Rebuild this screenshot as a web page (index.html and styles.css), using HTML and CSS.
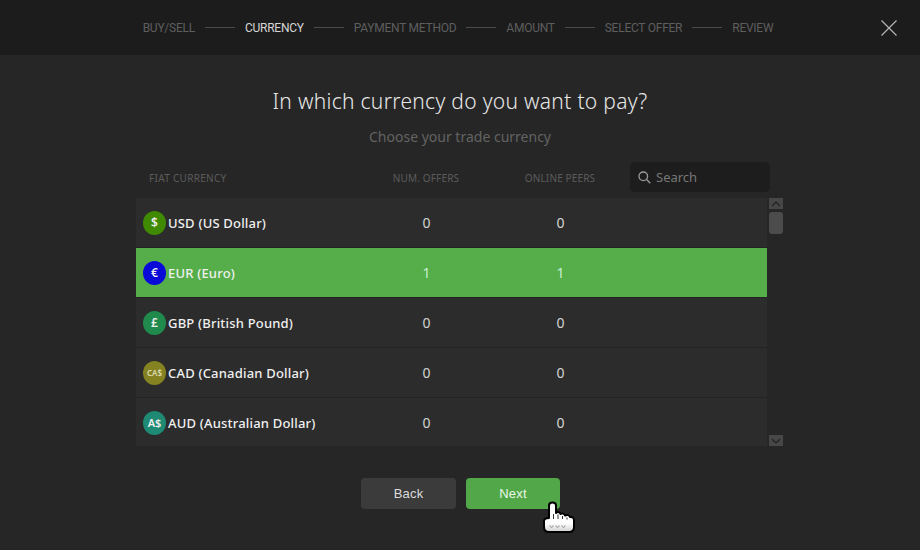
FILE: index.html
```html
<!DOCTYPE html>
<html lang="en">
<head>
<meta charset="utf-8">
<title>Currency</title>
<link rel="stylesheet" href="styles.css">
</head>
<body>
<header class="top">
  <nav class="steps">
    <span class="step">BUY/SELL</span><i class="line"></i>
    <span class="step active">CURRENCY</span><i class="line"></i>
    <span class="step">PAYMENT METHOD</span><i class="line"></i>
    <span class="step">AMOUNT</span><i class="line"></i>
    <span class="step">SELECT OFFER</span><i class="line"></i>
    <span class="step">REVIEW</span>
  </nav>
  <svg class="close" width="16" height="16" viewBox="0 0 16 16"><path d="M.5.5l15 15M15.500.5l-15 15" stroke="#b4b4b4" stroke-width="1.200" fill="none"/></svg>
</header>
<main class="main">
  <h1 class="title">In which currency do you want to pay?</h1>
  <p class="sub">Choose your trade currency</p>
  <section class="table">
    <div class="thead">
      <span class="th first">FIAT CURRENCY</span>
      <span class="th">NUM. OFFERS</span>
      <span class="th">ONLINE PEERS</span>
      <div class="search">
        <svg width="13" height="13" viewBox="0 0 13 13"><circle cx="5.300" cy="5.300" r="4.300" stroke="#9a9a9a" stroke-width="1.300" fill="none"/><path d="M8.500 8.500L12.300 12.300" stroke="#9a9a9a" stroke-width="1.300"/></svg>
        <span>Search</span>
      </div>
    </div>
    <div class="tbody">
      <div class="rows">
        <div class="row"><div class="name"><span class="coin usd">$</span>USD (US Dollar)</div><span class="num">0</span><span class="num">0</span></div>
        <div class="row selected"><div class="name"><span class="coin eur">€</span>EUR (Euro)</div><span class="num">1</span><span class="num">1</span></div>
        <div class="row"><div class="name"><span class="coin gbp">£</span>GBP (British Pound)</div><span class="num">0</span><span class="num">0</span></div>
        <div class="row"><div class="name"><span class="coin cad">CA$</span>CAD (Canadian Dollar)</div><span class="num">0</span><span class="num">0</span></div>
        <div class="row"><div class="name"><span class="coin aud">A$</span>AUD (Australian Dollar)</div><span class="num">0</span><span class="num">0</span></div>
      </div>
      <div class="scroll">
        <div class="arrow"><svg width="10" height="6" viewBox="0 0 10 6"><path d="M1 5l4-4 4 4" stroke="#222" stroke-width="1.200" fill="none"/></svg></div>
        <div class="thumb"></div>
        <div class="spacer"></div>
        <div class="arrow"><svg width="10" height="6" viewBox="0 0 10 6"><path d="M1 1l4 4 4-4" stroke="#222" stroke-width="1.200" fill="none"/></svg></div>
      </div>
    </div>
  </section>
  <div class="actions">
    <button class="btn back">Back</button>
    <button class="btn next">Next</button>
    <svg class="cursor" width="32" height="33" viewBox="0 0 32 33">
      <defs><linearGradient id="hand" x1="0" y1="0" x2="0" y2="1"><stop offset="0.700" stop-color="#fff"/><stop offset="1" stop-color="#d0d0d0"/></linearGradient></defs>
      <path d="M6 4.500C6 .5 13 .5 13 4.500V12C14.500 10.500 17 11 17.500 13C19 12 21.500 12.500 22 14.500C24 13.500 26.500 14 27 16C29 15.500 31 17 31 19V26C31 29 29 31 26 31H6C3 31 1 29 1 26V20C1 18 3 17 6 17Z" fill="url(#hand)" stroke="#000" stroke-width="2" stroke-linejoin="round"/>
      <path d="M10.500 13v5M15 13.500v4.500M19.500 15v3M24 16.500v2" stroke="#333" stroke-width="1"/>
      <path d="M7 24.500c0 2.500 3 2.500 3 0M13 24.500c0 2.500 3 2.500 3 0M19 24.500c0 2.500 3 2.500 3 0" stroke="#8a8a8a" stroke-width="1" fill="none"/>
    </svg>
  </div>
</main>
</body>
</html>
```
FILE: styles.css
```css
* { box-sizing: border-box; }
html, body { margin: 0; height: 100%; }
body {
  width: 920px;
  height: 550px;
  overflow: hidden;
  background: #262626;
  font-family: "Noto Sans", "Open Sans", sans-serif;
  color: #e8e8e8;
}
.top {
  height: 55px;
  background: #1c1c1c;
  display: flex;
  align-items: center;
  justify-content: center;
  position: relative;
}
.steps { display: flex; align-items: center; gap: 10px; margin-right: 4px; }
.step { font-family: Roboto, sans-serif; font-size: 12px; color: #5e5e5e; line-height: 16px; letter-spacing: -0.25px; }
.step.active { color: #d6d6d6; }
.line { width: 30px; height: 1px; background: #4a4a4a; }
.close { position: absolute; left: 881px; top: 20px; }
.main { display: flex; flex-direction: column; align-items: center; }
.title { margin: 32px 0 0; font-size: 21px; font-weight: 300; line-height: 28px; color: #e8e8e8; letter-spacing: 0.3px; }
.sub { margin: 12px 0 0; font-size: 14px; line-height: 20px; color: #636363; }
.table { width: 648px; margin-top: 15px; align-self: flex-start; margin-left: 136px; }
.thead {
  display: grid;
  grid-template-columns: 223px 134px 134px 140px;
  align-items: center;
  height: 30px;
  margin-bottom: 6px;
}
.th { font-size: 10px; color: #5c5c5c; text-align: center; letter-spacing: 0.15px; padding-top: 2px; }
.th.first { text-align: left; padding-left: 13px; letter-spacing: 0.3px; }
.search {
  grid-column: 4;
  margin-left: 3px;
  width: 140px;
  height: 30px;
  background: #1d1d1d;
  border-radius: 5px;
  display: flex;
  align-items: center;
  gap: 5px;
  padding-left: 8px;
  font-size: 13px;
  color: #777;
}
.tbody { display: flex; gap: 2px; height: 250px; }
.rows { width: 631px; }
.row {
  display: grid;
  grid-template-columns: 223.5px 134px 134px;
  align-items: center;
  height: 50px;
  background: #2c2c2c;
  border-bottom: 1px solid #232323;
}
.row:last-child { height: 48px; border-bottom: 0; padding-top: 1px; }
.row.selected { background: #55ae4a; color: #eef8ec; }
.name { display: flex; align-items: center; gap: 2px; padding-left: 7px; font-size: 13px; font-weight: 500; letter-spacing: 0.19px; color: #f0f0f0; }
.coin {
  width: 23px;
  height: 24px;
  border-radius: 50%;
  display: flex;
  align-items: center;
  justify-content: center;
  font-size: 12px;
  font-weight: 600;
  letter-spacing: 0;
  color: #eee;
}
.usd { background: #3f8a00; }
.eur { background: #0a0ad8; }
.gbp { background: #1f8a4c; }
.cad { background: #858222; font-size: 8px; color: #dcdcb0; }
.aud { background: #1f8a73; font-size: 11px; }
.num { text-align: center; font-size: 14px; color: #d4d4d4; }
.selected .num { color: #c8f0d0; }
.scroll { width: 14px; display: flex; flex-direction: column; gap: 3px; }
.arrow { height: 11px; background: #474747; display: flex; align-items: center; justify-content: center; }
.thumb { height: 22px; background: #4c4c4c; border-radius: 3px; }
.spacer { flex: 1; }
.scroll .arrow:last-child { margin-bottom: 2px; }
.actions { display: flex; gap: 10px; margin-top: 30px; margin-left: 1px; position: relative; }
.btn {
  width: 95px;
  height: 31px;
  border: 0;
  border-radius: 4px;
  font: 400 13px "Liberation Sans", Arial, sans-serif;
  letter-spacing: 0.2px;
}
.back { background: #3b3b3b; color: #dcdcdc; }
.next { background: #52a849; color: #e8f6e6; width: 94px; }
.cursor { position: absolute; left: 182px; top: 23px; }
```
